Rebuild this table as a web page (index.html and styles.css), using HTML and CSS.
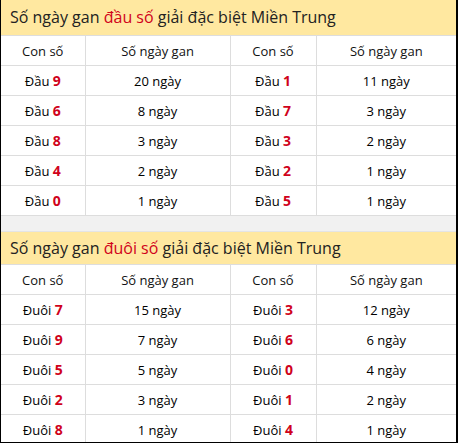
FILE: index.html
```html
<!DOCTYPE html>
<html lang="vi">
<head>
<meta charset="utf-8">
<link rel="stylesheet" href="styles.css">
</head>
<body>
<div class="wrap">
  <div class="title">Số ngày gan <span class="hl">đầu số</span> giải đặc biệt Miền Trung</div>
  <table class="gan">
    <colgroup><col class="c1"><col class="c2"><col class="c3"><col class="c4"></colgroup>
    <tr class="head"><td>Con số</td><td>Số ngày gan</td><td>Con số</td><td>Số ngày gan</td></tr>
    <tr><td>Đầu <b>9</b></td><td>20 ngày</td><td>Đầu <b>1</b></td><td>11 ngày</td></tr>
    <tr><td>Đầu <b>6</b></td><td>8 ngày</td><td>Đầu <b>7</b></td><td>3 ngày</td></tr>
    <tr><td>Đầu <b>8</b></td><td>3 ngày</td><td>Đầu <b>3</b></td><td>2 ngày</td></tr>
    <tr><td>Đầu <b>4</b></td><td>2 ngày</td><td>Đầu <b>2</b></td><td>1 ngày</td></tr>
    <tr><td>Đầu <b>0</b></td><td>1 ngày</td><td>Đầu <b>5</b></td><td>1 ngày</td></tr>
  </table>
  <div class="gap"></div>
  <div class="title t2">Số ngày gan <span class="hl">đuôi số</span> giải đặc biệt Miền Trung</div>
  <table class="gan">
    <colgroup><col class="c1"><col class="c2"><col class="c3"><col class="c4"></colgroup>
    <tr class="head"><td>Con số</td><td>Số ngày gan</td><td>Con số</td><td>Số ngày gan</td></tr>
    <tr><td>Đuôi <b>7</b></td><td>15 ngày</td><td>Đuôi <b>3</b></td><td>12 ngày</td></tr>
    <tr><td>Đuôi <b>9</b></td><td>7 ngày</td><td>Đuôi <b>6</b></td><td>6 ngày</td></tr>
    <tr><td>Đuôi <b>5</b></td><td>5 ngày</td><td>Đuôi <b>0</b></td><td>4 ngày</td></tr>
    <tr><td>Đuôi <b>2</b></td><td>3 ngày</td><td>Đuôi <b>1</b></td><td>2 ngày</td></tr>
    <tr><td>Đuôi <b>8</b></td><td>1 ngày</td><td>Đuôi <b>4</b></td><td>1 ngày</td></tr>
  </table>
</div>
</body>
</html>
```
FILE: styles.css
```css
html, body {
  margin: 0;
  padding: 0;
  background: #fff;
}
.wrap {
  width: 458px;
  height: 443px;
  box-sizing: border-box;
  border-left: 1px solid #000;
  border-right: 2px solid #000;
  border-bottom: 1px solid #000;
  overflow: hidden;
  font-family: "Open Sans", "Noto Sans", sans-serif;
  color: #222;
}
.title {
  height: 36px;
  box-sizing: border-box;
  background: #ffe8a0;
  border-bottom: 1px solid #ddd;
  padding-left: 9px;
  font-size: 16px;
  line-height: 35px;
  color: #222;
}
.title.t2 {
  height: 33px;
  line-height: 32px;
}
.hl {
  color: #d0021b;
}
.gan {
  width: 100%;
  border-collapse: collapse;
  table-layout: fixed;
}
.c1 { width: 84px; }
.c2 { width: 145px; }
.c3 { width: 86px; }
.c4 { width: auto; }
.gan td {
  height: 29px;
  padding: 0;
  border: 1px solid #ddd;
  text-align: center;
  vertical-align: middle;
  font-size: 13px;
  color: #000;
  line-height: 18px;
}
.gan tr:first-child td { border-top: 0; }
.gan td:first-child { border-left: 0; }
.gan td:last-child { border-right: 0; }
.gan b {
  color: #d0021b;
  font-weight: bold;
  font-size: 14px;
  line-height: 1;
}
.head td {
  font-weight: 500;
  color: #111;
}
.gap {
  height: 15px;
  background: #f1f1f1;
  border-bottom: 1px solid #e4e4e4;
}
```
